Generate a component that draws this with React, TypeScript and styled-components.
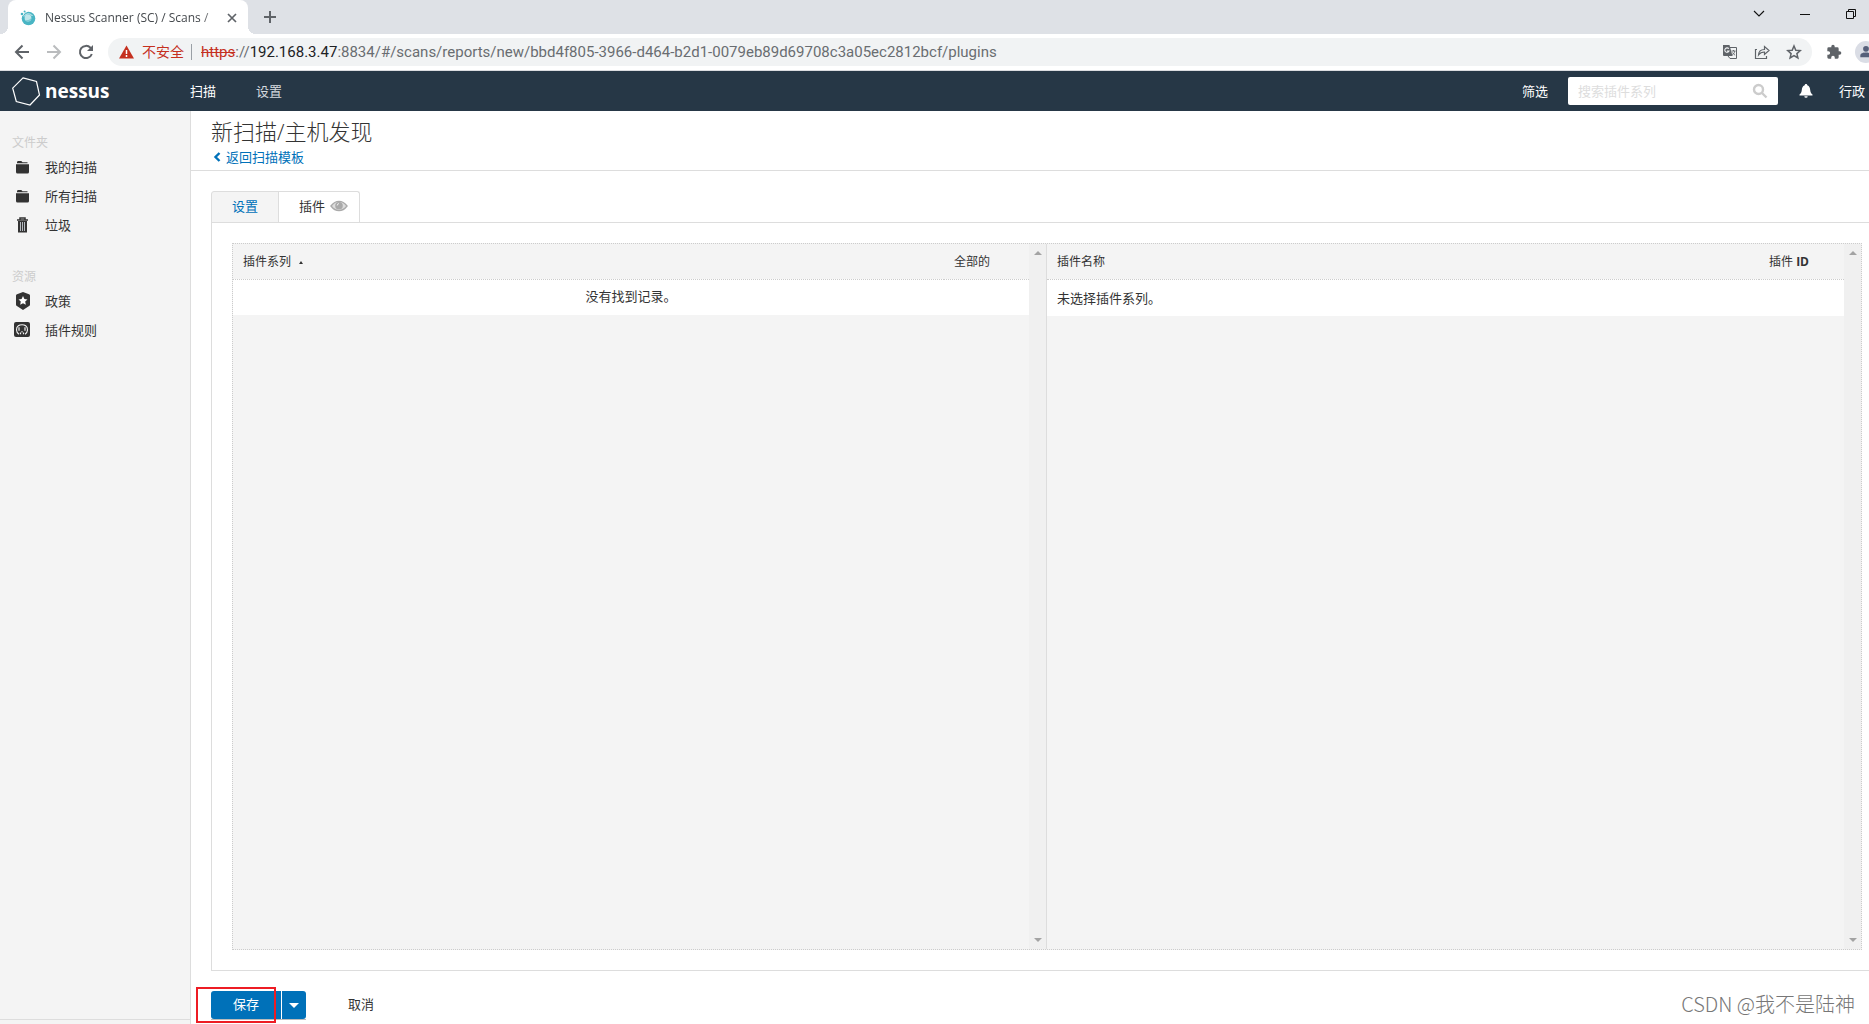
import React from "react";
import styled, { createGlobalStyle, css } from "styled-components";

const GlobalStyle = createGlobalStyle`
  * { box-sizing: border-box; }
  html, body, #root { height: 100%; }
  body {
    margin: 0;
    background: #fff;
    color: #333;
    font: 13px/20px "Open Sans", "Noto Sans CJK SC", sans-serif;
    overflow: hidden;
  }
  button, input { font: inherit; color: inherit; }
  button { padding: 0; border: 0; background: none; cursor: pointer; }
  a { text-decoration: none; color: inherit; }
  h1, h2, ul { margin: 0; padding: 0; font-weight: 400; }
  ul { list-style: none; }
  svg { display: block; flex: none; }
`;

const Window = styled.div`
  display: flex;
  flex-direction: column;
  height: 100vh;
  position: relative;
  overflow: hidden;
`;

/* ---------- browser chrome ---------- */
const TabStrip = styled.div`
  display: flex;
  flex: none;
  height: 34px;
  padding-left: 8px;
  background: #dee1e6;
`;
const BrowserTab = styled.div`
  position: relative;
  display: flex;
  align-items: center;
  width: 240px;
  height: 34px;
  padding: 1px 10px 0 12px;
  background: #fff;
  border-radius: 8px 8px 0 0;
  color: #45494d;
  &::before, &::after {
    content: "";
    position: absolute;
    bottom: 0;
    width: 8px;
    height: 8px;
  }
  &::before { left: -8px; background: radial-gradient(circle at 0 0, transparent 8px, #fff 8px); }
  &::after { right: -8px; background: radial-gradient(circle at 100% 0, transparent 8px, #fff 8px); }
`;
const TabTitle = styled.span`
  flex: 1;
  margin-left: 9px;
  overflow: hidden;
  white-space: nowrap;
  font-family: "Open Sans", sans-serif;
  font-size: 12px;
  mask-image: linear-gradient(to right, #000 156px, transparent 180px);
`;
const ChromeButton = styled.button<{ $w?: number; $h?: number; $dim?: boolean }>`
  display: flex;
  flex: none;
  align-items: center;
  justify-content: center;
  width: ${(p) => p.$w ?? 32}px;
  height: ${(p) => p.$h ?? 28}px;
  color: ${(p) => (p.$dim ? "#babcbe" : "#5f6368")};
`;
const WindowControls = styled.div`
  display: flex;
  margin: 0 -5px 0 auto;
  ${ChromeButton} { color: #111; }
`;
const Toolbar = styled.div`
  display: flex;
  flex: none;
  align-items: center;
  height: 37px;
  padding: 0 0 1px 6px;
  border-bottom: 1px solid #dadce0;
  overflow: hidden;
`;
const AddressBar = styled.div`
  display: flex;
  flex: 1;
  align-items: center;
  min-width: 0;
  height: 28px;
  margin-left: 6px;
  padding: 0 2px 0 11px;
  border-radius: 14px;
  background: #f1f3f4;
`;
const Warning = styled.span`
  margin-left: 8px;
  padding-right: 7px;
  border-right: 1px solid #9aa0a6;
  line-height: 16px;
  font-size: 14px;
  color: #c5301f;
`;
const Url = styled.span`
  flex: 1;
  margin-left: 9px;
  overflow: hidden;
  white-space: nowrap;
  font-family: Roboto, sans-serif;
  font-size: 15px;
  color: #696d71;
  s { color: #c5301f; }
  b { font-weight: 400; color: #202124; }
`;
const Avatar = styled.span`
  display: flex;
  flex: none;
  align-items: center;
  justify-content: center;
  width: 22px;
  height: 22px;
  margin-right: -8px;
  border-radius: 50%;
  background: #dadde5;
  color: #56607a;
`;

/* ---------- application header ---------- */
const TopNav = styled.header`
  display: flex;
  flex: none;
  align-items: center;
  height: 40px;
  padding: 0 4px 0 12px;
  background: #263746;
  color: #fff;
`;
const Brand = styled.a`
  display: flex;
  align-items: center;
  gap: 4px;
  width: 178px;
  font: 700 19px/24px "Open Sans", sans-serif;
  span { padding-bottom: 1px; }
`;
const NavLink = styled.a<{ $muted?: boolean }>`
  margin-right: 40px;
  color: ${(p) => (p.$muted ? "#d5dadf" : "#fff")};
`;
const SearchBox = styled.label`
  display: flex;
  align-items: center;
  width: 210px;
  height: 28px;
  margin: 0 20px;
  padding: 0 10px;
  border-radius: 2px;
  background: #fff;
  color: #ccc;
  input {
    flex: 1;
    min-width: 0;
    padding: 0;
    border: 0;
    outline: 0;
    background: none;
    color: #333;
  }
  input::placeholder { color: #ddd; opacity: 1; }
`;
const NavRight = styled.nav`
  display: flex;
  align-items: center;
  margin-left: auto;
`;
const BellButton = styled.button`
  margin: 0 25px 0 0;
`;

/* ---------- layout ---------- */
const Body = styled.div`
  display: flex;
  flex: 1;
  min-height: 0;
`;
const Sidebar = styled.aside`
  display: flex;
  flex-direction: column;
  width: 191px;
  padding-top: 22px;
  border-right: 1px solid #ddd;
  background: #f4f4f4;
`;
const SideTitle = styled.h2`
  padding-left: 12px;
  font-size: 12px;
  line-height: 19px;
  color: #ccc;
`;
const SideList = styled.ul`
  margin-bottom: 28px;
`;
const SideLink = styled.a`
  display: flex;
  align-items: center;
  gap: 14px;
  height: 29px;
  padding-left: 14px;
`;
const SideFoot = styled.div`
  height: 5px;
  margin-top: auto;
  border-top: 1px solid #ddd;
`;
const Main = styled.main`
  display: flex;
  flex: 1;
  flex-direction: column;
  min-width: 0;
`;
const PageHead = styled.div`
  padding: 4px 20px 0;
  height: 60px;
  border-bottom: 1px solid #ddd;
`;
const PageTitle = styled.h1`
  font-size: 22px;
  font-weight: 300;
  line-height: 32px;
`;
const BackLink = styled.a`
  display: flex;
  align-items: center;
  gap: 4px;
  padding-left: 1px;
  color: #0071b9;
`;
const Content = styled.div`
  display: flex;
  flex: 1;
  flex-direction: column;
  min-height: 0;
  padding: 20px 0 0 20px;
`;
const Tabs = styled.div`
  display: flex;
  flex: none;
  height: 32px;
  margin-bottom: -1px;
`;
const Tab = styled.button<{ $active?: boolean }>`
  display: flex;
  align-items: center;
  gap: 5px;
  padding: 0 20px 2px;
  border: 1px solid #ddd;
  background: #f4f4f4;
  color: #0071b9;
  border-radius: 3px 0 0 0;
  ${(p) =>
    p.$active &&
    css`
      padding: 0 11px 2px 20px;
      border-left: 0;
      border-bottom-color: #fff;
      border-radius: 0 3px 0 0;
      background: #fff;
      color: #333;
      box-shadow: -1px 0 0 #ddd;
    `}
`;
const Panel = styled.section`
  display: flex;
  flex: 1;
  min-height: 0;
  padding: 20px 7px 20px 20px;
  border: solid #ddd;
  border-width: 1px 0 1px 1px;
`;
const Grid = styled.div`
  display: grid;
  flex: 1;
  grid-template-columns: 1fr 1fr;
  border: 1px dotted #ccc;
  background: #f4f4f4;
`;
const Pane = styled.div`
  display: flex;
  align-items: stretch;
  margin-right: 1px;
  & + & {
    margin: 0 0 0 -1px;
    border-left: 1px solid #ddd;
  }
`;
const PaneBody = styled.div`
  flex: 1;
`;
const Table = styled.table<{ $center?: boolean }>`
  width: 100%;
  border-collapse: collapse;
  table-layout: fixed;
  th {
    height: 35px;
    padding: 1px 10px 0;
    border-bottom: 1px dotted #ccc;
    text-align: left;
    font-size: 12px;
    font-weight: 400;
  }
  th:last-child { width: 85px; }
  td {
    height: ${(p) => (p.$center ? 36 : 37)}px;
    padding: ${(p) => (p.$center ? "0 10px 2px" : "0 10px")};
    background: #fff;
    text-align: ${(p) => (p.$center ? "center" : "left")};
  }
`;
const SortMark = styled.span`
  display: inline-block;
  margin-left: 8px;
  border: solid transparent;
  border-width: 0 2px 3px;
  border-bottom-color: #333;
  vertical-align: middle;
`;
const Scrollbar = styled.div`
  display: flex;
  flex-direction: column;
  justify-content: space-between;
  width: 17px;
  background: #f0f0f0;
`;
const ScrollArrow = styled.button<{ $down?: boolean }>`
  display: flex;
  align-items: center;
  justify-content: center;
  height: 18px;
  &::before {
    content: "";
    border: 4px solid transparent;
    ${(p) =>
      p.$down
        ? "border-top-color: #a3a3a3; border-bottom: 0;"
        : "border-bottom-color: #a3a3a3; border-top: 0;"}
  }
`;
const Actions = styled.div`
  display: flex;
  flex: none;
  height: 53px;
  padding-top: 20px;
`;
const SaveGroup = styled.div`
  position: relative;
  display: flex;
  gap: 1px;
  height: 28px;
  box-shadow: 0 1px 0 #bbb;
`;
const SaveButton = styled.button`
  width: 70px;
  padding-bottom: 2px;
  border-radius: 3px 0 0 3px;
  background: #0071b9;
  color: #fff;
`;
const CaretButton = styled.button`
  display: flex;
  align-items: center;
  justify-content: center;
  width: 24px;
  border-radius: 0 3px 3px 0;
  background: #0071b9;
  &::before {
    content: "";
    border: 5px solid transparent;
    border-top-color: #fff;
    border-bottom: 0;
  }
`;
const Highlight = styled.span`
  position: absolute;
  left: -15px;
  top: -4px;
  width: 80px;
  height: 36px;
  border: 2px solid #ed1c24;
  pointer-events: none;
`;
const CancelButton = styled.button`
  height: 28px;
  margin-left: 42px;
  padding-bottom: 2px;
`;
const Watermark = styled.div`
  position: absolute;
  right: 14px;
  bottom: 6px;
  font: 300 20px/28px "Noto Sans CJK SC", sans-serif;
  color: #777;
`;

/* ---------- icons ---------- */
const Favicon = () => (
  <svg width="16" height="16" viewBox="0 0 16 16">
    <circle cx="8.5" cy="8.5" r="6.8" fill="#49b5c4" />
    <path d="M4 6.500A5 5 0 0 1 12.500 6" stroke="#d9f1f4" strokeWidth="1" fill="none" />
    <circle cx="8" cy="8" r="3.4" fill="#bfe6eb" />
    <path d="M11.400 8a3.400 3.400 0 0 1-6 2.200q3.500.6 6-2.200z" fill="#7cc9d4" />
    <circle cx="2" cy="4" r="1.300" fill="#49b5c4" />
    <circle cx="4.600" cy="1.600" r="1" fill="#49b5c4" />
    <path d="M5.500 2.800l1.800-1.600M2.500 6l2-3" stroke="#fff" strokeWidth=".8" />
  </svg>
);
const Stroke = ({ d, size = 16, w = 2, box = 16 }: { d: string; size?: number; w?: number; box?: number }) => (
  <svg width={size} height={size} viewBox={`0 0 ${box} ${box}`} fill="none" stroke="currentColor" strokeWidth={w}>
    <path d={d} />
  </svg>
);
const Fill = ({ d, size = 16, box = 24 }: { d: string; size?: number; box?: number }) => (
  <svg width={size} height={size} viewBox={`0 0 ${box} ${box}`} fill="currentColor" fillRule="evenodd">
    <path d={d} />
  </svg>
);
const TranslateIcon = () => (
  <svg width="16" height="16" viewBox="0 0 16 16" fill="none">
    <path d="M7 3.5h7.5v11H8L6 12" stroke="#5f6368" />
    <path d="M1 1h6.5l3 11H2a1 1 0 0 1-1-1z" fill="#5f6368" />
    <path d="M6.8 4.8A2.2 2.2 0 1 0 7 7H5" stroke="#f1f3f4" strokeWidth="1.1" />
    <path d="M9.5 7h4M11.5 6v1m1.3 0c-.3 2-1.300 3-2.600 4M10.500 8.500c.6 1.200 1.500 2 2.600 2.700" stroke="#5f6368" strokeWidth=".9" />
  </svg>
);
const FolderIcon = () => (
  <svg width="17" height="16" viewBox="0 -1 17 16" fill="#333">
    <path d="M3 2.500C3 1.700 3.500 1 4.300 1h3l1.200 1.200H13.500V3.300H3zM2 4.200h13V12a1.500 1.500 0 0 1-1.500 1.500h-10A1.500 1.500 0 0 1 2 12z" />
  </svg>
);
const TrashIcon = () => (
  <svg width="17" height="16" viewBox="0 0 17 16">
    <path d="M6 2.500V1h5v1.500M3 3h11" stroke="#333" strokeWidth="1.500" fill="none" />
    <path d="M4 4h9v11.500H4z" fill="#333" />
    <path d="M6.500 5v9M8.500 5v9M10.500 5v9" stroke="#d5dde3" strokeWidth=".8" />
  </svg>
);
const ShieldIcon = () => (
  <svg width="17" height="18" viewBox="0 0 17 18">
    <path d="M9 0l6 2.200q1 .4 1 1.300v9q0 1-.9 1.500L9 18l-6.100-4Q2 13.500 2 12.500v-9q0-.9 1-1.300z" fill="#333" />
    <path d="M9 4l1.400 3 3.100.4-2.300 2.200.6 3.200L9 11.300l-2.800 1.500.6-3.200-2.300-2.200 3.100-.4z" fill="#fff" />
  </svg>
);
const RulesIcon = () => (
  <svg width="17" height="16" viewBox="0 0 17 16">
    <rect width="16" height="15" rx="2" fill="#333" />
    <path d="M5 12.200C1.800 10.500 1.800 5.500 4.300 3.800c2-1.500 5.500-1.500 7.400 0 2.500 1.700 2.500 6.700-.7 8.400" fill="none" stroke="#f4f4f4" strokeWidth="1.100" />
    <path d="M5 5.200v3.600M11 5.200v3.600M6.500 12.200v-1.800M9.500 12.200v-1.800" stroke="#f4f4f4" strokeWidth="1.200" />
    <path d="M7.500 9h1v1.500h-1z" fill="#f4f4f4" />
  </svg>
);
const EyeIcon = () => (
  <svg width="18" height="12" viewBox="0 0 18 12">
    <path d="M1 6q3.500-4.600 8-4.600T17 6q-3.500 4.600-8 4.600T1 6z" fill="#ddd" stroke="#aaa" strokeWidth="1.400" />
    <circle cx="9" cy="5.800" r="3.800" fill="#aaa" />
    <path d="M7.200 5.500q0-1.800 1.800-1.900" stroke="#eee" fill="none" />
  </svg>
);
const HexLogo = () => (
  <svg width="29" height="29" viewBox="0 0 29 29" fill="none" stroke="#fff" strokeWidth="1.200">
    <path d="M11 .8L24.500 4.500 27.500 18 18 28 4.300 24.500.7 11.200z" />
  </svg>
);

const folders = [
  { label: "我的扫描", icon: <FolderIcon /> },
  { label: "所有扫描", icon: <FolderIcon /> },
  { label: "垃圾", icon: <TrashIcon /> },
];
const resources = [
  { label: "政策", icon: <ShieldIcon /> },
  { label: "插件规则", icon: <RulesIcon /> },
];

function SideMenu({ title, items }: { title: string; items: typeof folders }) {
  return (
    <>
      <SideTitle>{title}</SideTitle>
      <SideList>
        {items.map((item) => (
          <li key={item.label}>
            <SideLink href="#">
              {item.icon}
              {item.label}
            </SideLink>
          </li>
        ))}
      </SideList>
    </>
  );
}

function PluginPane({ head, message, center }: { head: [React.ReactNode, React.ReactNode]; message: string; center?: boolean }) {
  return (
    <Pane>
      <PaneBody>
        <Table $center={center}>
          <thead>
            <tr>
              <th>{head[0]}</th>
              <th>{head[1]}</th>
            </tr>
          </thead>
          <tbody>
            <tr>
              <td colSpan={2}>{message}</td>
            </tr>
          </tbody>
        </Table>
      </PaneBody>
      <Scrollbar>
        <ScrollArrow aria-label="向上滚动" />
        <ScrollArrow $down aria-label="向下滚动" />
      </Scrollbar>
    </Pane>
  );
}

export default function App() {
  return (
    <Window>
      <GlobalStyle />
      <TabStrip>
        <BrowserTab>
          <Favicon />
          <TabTitle>Nessus Scanner (SC) / Scans /</TabTitle>
          <ChromeButton $w={12} aria-label="关闭标签页">
            <Stroke d="M1 1l8 8M9 1l-8 8" size={10} box={10} w={1.7} />
          </ChromeButton>
        </BrowserTab>
        <ChromeButton $w={44} $h={34} aria-label="新标签页">
          <Stroke d="M6 0v12M0 6h12" size={12} box={12} />
        </ChromeButton>
        <WindowControls>
          <ChromeButton $w={46} aria-label="搜索标签页">
            <Stroke d="M1 3l5 5 5-5" size={12} box={12} w={1.1} />
          </ChromeButton>
          <ChromeButton $w={46} aria-label="最小化">
            <Stroke d="M0 5.500h10" size={10} box={10} w={1} />
          </ChromeButton>
          <ChromeButton $w={46} aria-label="还原">
            <Stroke d="M.5 2.500h7v7h-7zM2.500 2.500v-2h7v7h-2" size={10} box={10} w={1} />
          </ChromeButton>
        </WindowControls>
      </TabStrip>
      <Toolbar>
        <ChromeButton aria-label="后退">
          <Stroke d="M15 8H2M8.500 1.500L2 8l6.500 6.500" />
        </ChromeButton>
        <ChromeButton $dim aria-label="前进">
          <Stroke d="M1 8h13M7.500 1.500L14 8l-6.500 6.500" />
        </ChromeButton>
        <ChromeButton aria-label="重新加载">
          <svg width="16" height="16" viewBox="0 0 16 16" fill="none" stroke="currentColor" strokeWidth="2">
            <path d="M13.800 10A6.100 6.100 0 1 1 12.500 3.800L14 5.300" />
            <path d="M15 1v6H9z" fill="currentColor" stroke="none" />
          </svg>
        </ChromeButton>
        <AddressBar>
          <svg width="15" height="14" viewBox="0 0 15 14">
            <path d="M7.500.5L15 13.500H0z" fill="#c5301f" />
            <path d="M7.500 5v4M7.500 10v2" stroke="#fff" strokeWidth="1.500" />
          </svg>
          <Warning>不安全</Warning>
          <Url>
            <s>https</s>://<b>192.168.3.47</b>:8834/#/scans/reports/new/bbd4f805-3966-d464-b2d1-0079eb89d69708c3a05ec2812bcf/plugins
          </Url>
          <ChromeButton aria-label="翻译">
            <TranslateIcon />
          </ChromeButton>
          <ChromeButton aria-label="分享">
            <Stroke d="M3 5.500H1.500v9h11V12M4.500 11c.2-4 2.500-5.500 6-5.500V2.500l4.500 4-4.500 4V8c-3 0-4.500.8-6 3z" w={1.2} />
          </ChromeButton>
          <ChromeButton aria-label="收藏">
            <Stroke d="M8 2l1.800 4.200 4.500.4-3.400 3 1 4.400L8 11.600 4.100 14l1-4.400-3.400-3 4.500-.4z" w={1.5} />
          </ChromeButton>
        </AddressBar>
        <ChromeButton $w={43} aria-label="扩展程序">
          <Fill d="M20.500 11H19V7a2 2 0 0 0-2-2h-4V3.500a2.500 2.500 0 0 0-5 0V5H4a2 2 0 0 0-2 2v3.800h1.500a2.700 2.700 0 0 1 0 5.400H2V20a2 2 0 0 0 2 2h3.800v-1.500a2.700 2.700 0 0 1 5.400 0V22H17a2 2 0 0 0 2-2v-4h1.500a2.500 2.500 0 0 0 0-5z" />
        </ChromeButton>
        <Avatar>
          <Fill d="M8 1a3.300 3.300 0 1 1 0 6.600A3.300 3.300 0 0 1 8 1zM1.500 14v-2C1.500 9.500 5 8.600 8 8.600s6.500.9 6.500 3.400v2z" size={14} box={16} />
        </Avatar>
      </Toolbar>

      <TopNav>
        <Brand href="#">
          <HexLogo />
          <span>nessus</span>
        </Brand>
        <NavLink href="#">扫描</NavLink>
        <NavLink href="#" $muted>设置</NavLink>
        <NavRight>
          <a href="#">筛选</a>
          <SearchBox>
            <input type="text" aria-label="搜索插件系列" placeholder="搜索插件系列" />
            <Stroke d="M10 10l4.500 4.500M11 6.500a4.500 4.500 0 1 1-9 0 4.500 4.500 0 0 1 9 0z" w={2.4} />
          </SearchBox>
          <BellButton aria-label="通知">
            <Fill d="M8 1c.8 0 1.200.5 1.300 1.200C11.500 3 12 5 12.200 7c.2 2.200 1 3.500 2.300 4.500V12.500H1.500V11.500C2.800 10.500 3.600 9.200 3.800 7 4 5 4.500 3 6.700 2.200 6.800 1.500 7.200 1 8 1zM6.300 13.300h3.400a1.700 1.500 0 0 1-3.400 0z" box={16} />
          </BellButton>
          <a href="#">行政</a>
        </NavRight>
      </TopNav>

      <Body>
        <Sidebar>
          <SideMenu title="文件夹" items={folders} />
          <SideMenu title="资源" items={resources} />
          <SideFoot />
        </Sidebar>
        <Main>
          <PageHead>
            <PageTitle>新扫描/主机发现</PageTitle>
            <BackLink href="#">
              <Stroke d="M7.500 1L3.500 5l4 4" size={10} box={10} w={2.4} />
              返回扫描模板
            </BackLink>
          </PageHead>
          <Content>
            <Tabs>
              <Tab>设置</Tab>
              <Tab $active>
                插件
                <EyeIcon />
              </Tab>
            </Tabs>
            <Panel>
              <Grid>
                <PluginPane head={[<>插件系列<SortMark /></>, "全部的"]} message="没有找到记录。" center />
                <PluginPane head={["插件名称", <>插件 <b>ID</b></>]} message="未选择插件系列。" />
              </Grid>
            </Panel>
            <Actions>
              <SaveGroup>
                <SaveButton>保存</SaveButton>
                <CaretButton aria-label="更多保存选项" />
                <Highlight />
              </SaveGroup>
              <CancelButton>取消</CancelButton>
            </Actions>
          </Content>
        </Main>
      </Body>
      <Watermark>CSDN @我不是陆神</Watermark>
    </Window>
  );
}
